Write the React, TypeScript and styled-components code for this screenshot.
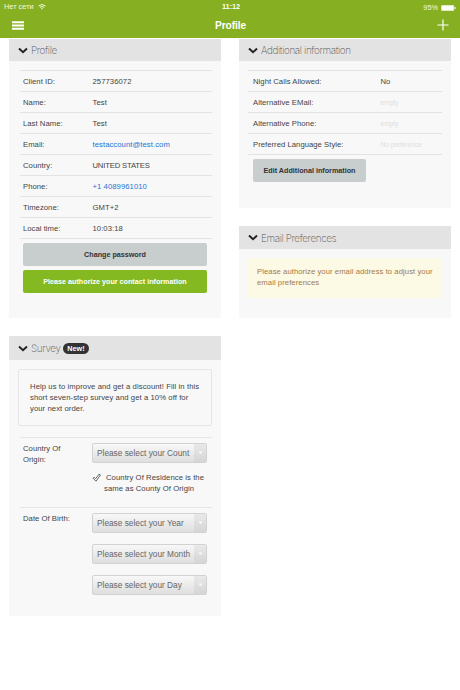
import React from "react";
import styled, { createGlobalStyle } from "styled-components";

const Global = createGlobalStyle`
  * { box-sizing: border-box; }
  body { margin: 0; background: #fff; font-family: "Liberation Sans", Arial, sans-serif; font-size: 7.7px; letter-spacing: 0.03px; color: #444; }
`;
const Page = styled.div`width: 460px; height: 690px; overflow: hidden; background: #fff;`;
const Top = styled.header`height: 38px; background: #86b021; color: #fff;`;
const Status = styled.div`
  height: 12px; display: grid; grid-template-columns: 1fr auto 1fr; align-items: center;
  padding: 0 4px 0 4px; font-size: 7.3px; color: #f4f9e2; line-height: 12px;
`;
const Carrier = styled.div`display: flex; align-items: center; gap: 4px; letter-spacing: 0.04px; margin-top: -1px;`;
const Clock = styled.div`font-size: 7.4px; font-weight: 700; color: #fff; letter-spacing: -0.1px; padding-left: 2px; margin-top: -1px;`;
const Battery = styled.div`display: flex; justify-content: flex-end; align-items: center; gap: 3px; padding-top: 2px;`;
const Nav = styled.div`
  height: 26px; display: grid; grid-template-columns: 1fr auto 1fr; align-items: center; padding: 0 11px 0 12px;
`;
const NavTitle = styled.h1`margin: 0; padding-top: 2px; font: 700 10.2px/22px "Liberation Sans", Arial, sans-serif; letter-spacing: -0.1px;`;
const Right = styled.div`display: flex; justify-content: flex-end;`;
const Columns = styled.main`display: flex; gap: 18px; padding: 1px 9px 0;`;
const Column = styled.div`width: 212px; display: flex; flex-direction: column; gap: 18px;`;
const Card = styled.section<{ $h: number }>`height: ${(p) => p.$h}px; background: #f8f8f8;`;
const CardHead = styled.div<{ $h: number }>`
  height: ${(p) => p.$h}px; background: #e3e3e3; display: flex; align-items: center; padding-left: 9px;
`;
const CardTitle = styled.h2<{ $w: number }>`
  margin: 0 0 0 3px; width: ${(p) => p.$w}px; white-space: nowrap; color: #555;
  font: 200 9.9px/20px Inter, Roboto, sans-serif; letter-spacing: -0.36px;
`;
const Badge = styled.span`
  height: 11px; width: 26px; border-radius: 6px; background: #333; color: #fff;
  font-size: 7.2px; font-weight: 700; line-height: 11px; text-align: center;
`;
const Rows = styled.div<{ $top: number; $inset: number }>`
  margin: ${(p) => p.$top}px 9px 0 ${(p) => p.$inset}px; border-bottom: 1px solid #e2e2e2;
`;
const Row = styled.div<{ $pad: number; $label: number }>`
  height: 21px; border-top: 1px solid #e2e2e2; display: grid; padding-left: ${(p) => p.$pad}px;
  grid-template-columns: ${(p) => p.$label}px 1fr; line-height: 21px; white-space: nowrap;
`;
const Value = styled.span<{ $kind?: string }>`
  color: ${(p) => (p.$kind === "link" ? "#2474d2" : p.$kind === "empty" ? "#e0e0e0" : "#444")};
  font-size: ${(p) => (p.$kind === "empty" ? "6.8px" : "inherit")};
  letter-spacing: ${(p) => (p.$kind === "caps" ? "-0.18px" : p.$kind === "empty" ? "-0.15px" : "0.06px")};
`;
const Button = styled.button<{ $green?: boolean; $w: number }>`
  display: block; width: ${(p) => p.$w}px; height: 23px; margin: 4px 0 0 14px; padding: 0; border: 0; border-radius: 2px;
  background: ${(p) => (p.$green ? "#84b921" : "#c8cdce")}; color: ${(p) => (p.$green ? "#fff" : "#333")};
  font: 700 7.2px/23px "Liberation Sans", Arial, sans-serif;
`;
const Notice = styled.p`
  margin: 9px 9px 0; height: 40px; padding: 9px 0 0 9px; background: #fcf9e5; color: #a27b4c;
  line-height: 10.8px; font-size: 7.7px; letter-spacing: 0.06px; white-space: nowrap;
`;
const Promo = styled.p`
  margin: 9px 9px 11px; height: 57px; padding: 12px 0 0 11px; border: 1px solid #e6e6e6; border-radius: 2px;
  line-height: 10.8px; letter-spacing: 0.075px; white-space: nowrap;
`;
const Field = styled.div<{ $h: number }>`
  height: ${(p) => p.$h}px; margin: 0 9px 0 11px; border-top: 1px solid #e6e6e6; padding-left: 3px;
  display: grid; grid-template-columns: 69px 115px;
`;
const Label = styled.span`padding-top: 5px; line-height: 11px;`;
const Controls = styled.div`display: flex; flex-direction: column; gap: 11px; padding-top: 5px;`;
const SelectBox = styled.div`
  height: 20px; flex: none; display: flex; justify-content: space-between; border: 1px solid #d2d2d2; border-radius: 2px;
  background: linear-gradient(#f8f8f8, #dedede); overflow: hidden; color: #666; font-size: 8.3px; letter-spacing: 0; line-height: 19px;
`;
const SelectText = styled.span`padding-left: 4px; width: 98px; white-space: nowrap; overflow: hidden;`;
const Arrow = styled.span`
  width: 12px; background: linear-gradient(#e9e9e9, #d5d5d5); display: flex; justify-content: center; padding-top: 7px;
`;
const Check = styled.div`
  display: grid; grid-template-columns: 12px 1fr; line-height: 10.8px; margin-top: -1px; letter-spacing: 0.07px; white-space: nowrap;
`;
const CheckText = styled.span`text-indent: 2px;`;

const Head = ({ title, w, h, badge }: { title: string; w: number; h: number; badge?: string }) => (
  <CardHead $h={h}>
    <svg width="10" height="7" viewBox="0 0 10 7">
      <path d="M1 1.6 5 5.2 9 1.6" fill="none" stroke="#222" strokeWidth="2" />
    </svg>
    <CardTitle $w={w}>{title}</CardTitle>
    {badge && <Badge>{badge}</Badge>}
  </CardHead>
);

const Select = ({ text }: { text: string }) => (
  <SelectBox>
    <SelectText>{text}</SelectText>
    <Arrow>
      <svg width="5" height="4" viewBox="0 0 5 4"><path d="M0.5 0.5h4L2.5 3.3z" fill="#fafafa" /></svg>
    </Arrow>
  </SelectBox>
);

const profile = [
  ["Client ID:", "257736072"],
  ["Name:", "Test"],
  ["Last Name:", "Test"],
  ["Email:", "testaccount@test.com", "link"],
  ["Country:", "UNITED STATES", "caps"],
  ["Phone:", "+1 4089961010", "link"],
  ["Timezone:", "GMT+2"],
  ["Local time:", "10:03:18"],
];
const additional = [
  ["Night Calls Allowed:", "No"],
  ["Alternative EMail:", "empty", "empty"],
  ["Alternative Phone:", "empty", "empty"],
  ["Preferred Language Style:", "No preference", "empty"],
];

export default function App() {
  return (
    <Page>
      <Global />
      <Top>
        <Status>
          <Carrier>
            Нет сети
            <svg width="8" height="6" viewBox="0 0 8 6" fill="none" stroke="#f4f9e2" strokeWidth="1">
              <path d="M0.5 2Q4-1 7.5 2M1.9 3.4Q4 1.6 6.1 3.4" />
              <path d="M3 4.4Q4 3.6 5 4.4L4 5.6z" fill="#f4f9e2" stroke="none" />
            </svg>
          </Carrier>
          <Clock>11:12</Clock>
          <Battery>
            95%
            <svg width="15" height="6" viewBox="0 0 15 6">
              <rect x="0.3" y="0.3" width="12.6" height="5.4" rx="1" fill="#fff" stroke="#dcebb4" strokeWidth="0.5" />
              <path d="M13.6 1.7q1.2.3 1.2 1.3t-1.2 1.3z" fill="#fff" />
            </svg>
          </Battery>
        </Status>
        <Nav>
          <svg width="12" height="9" viewBox="0 0 12 9">
            <path d="M0 1.2h12M0 4.5h12M0 7.8h12" stroke="#fff" strokeWidth="1.9" />
          </svg>
          <NavTitle>Profile</NavTitle>
          <Right>
            <svg width="12" height="12" viewBox="0 0 12 12">
              <path d="M6 .5v11M.5 6h11" stroke="#fff" strokeWidth="1.2" />
            </svg>
          </Right>
        </Nav>
      </Top>
      <Columns>
        <Column>
          <Card $h={279}>
            <Head title="Profile" w={30} h={22} />
            <Rows $top={9} $inset={11}>
              {profile.map(([l, v, k]) => (
                <Row key={l} $pad={3} $label={69.5}><span>{l}</span><Value $kind={k}>{v}</Value></Row>
              ))}
            </Rows>
            <Button $w={184}>Change password</Button>
            <Button $w={184} $green>Please authorize your contact information</Button>
          </Card>
          <Card $h={280}>
            <Head title="Survey" w={32} h={24} badge="New!" />
            <Promo>
              Help us to improve and get a discount! Fill in this<br />
              short seven-step survey and get a 10% off for<br />
              your next order.
            </Promo>
            <Field $h={70}>
              <Label>Country Of<br />Origin:</Label>
              <Controls>
                <Select text="Please select your Count" />
                <Check>
                  <svg width="10" height="10" viewBox="0 0 10 10">
                    <path d="M1 5.2 2.3 4.4 3.6 5.8 7 1.2 8.4 2 4 8.2z" fill="#fff" stroke="#444" strokeWidth="0.8" />
                  </svg>
                  <CheckText>Country Of Residence is the<br />same as County Of Origin</CheckText>
                </Check>
              </Controls>
            </Field>
            <Field $h={100}>
              <Label>Date Of Birth:</Label>
              <Controls>
                <Select text="Please select your Year" />
                <Select text="Please select your Month" />
                <Select text="Please select your Day" />
              </Controls>
            </Field>
          </Card>
        </Column>
        <Column>
          <Card $h={169}>
            <Head title="Additional information" w={100} h={22} />
            <Rows $top={9} $inset={9}>
              {additional.map(([l, v, k]) => (
                <Row key={l} $pad={5} $label={127.5}><span>{l}</span><Value $kind={k}>{v}</Value></Row>
              ))}
            </Rows>
            <Button $w={113}>Edit Additional information</Button>
          </Card>
          <Card $h={92}>
            <Head title="Email Preferences" w={90} h={23} />
            <Notice>Please authorize your email address to adjust your<br />email preferences</Notice>
          </Card>
        </Column>
      </Columns>
    </Page>
  );
}
